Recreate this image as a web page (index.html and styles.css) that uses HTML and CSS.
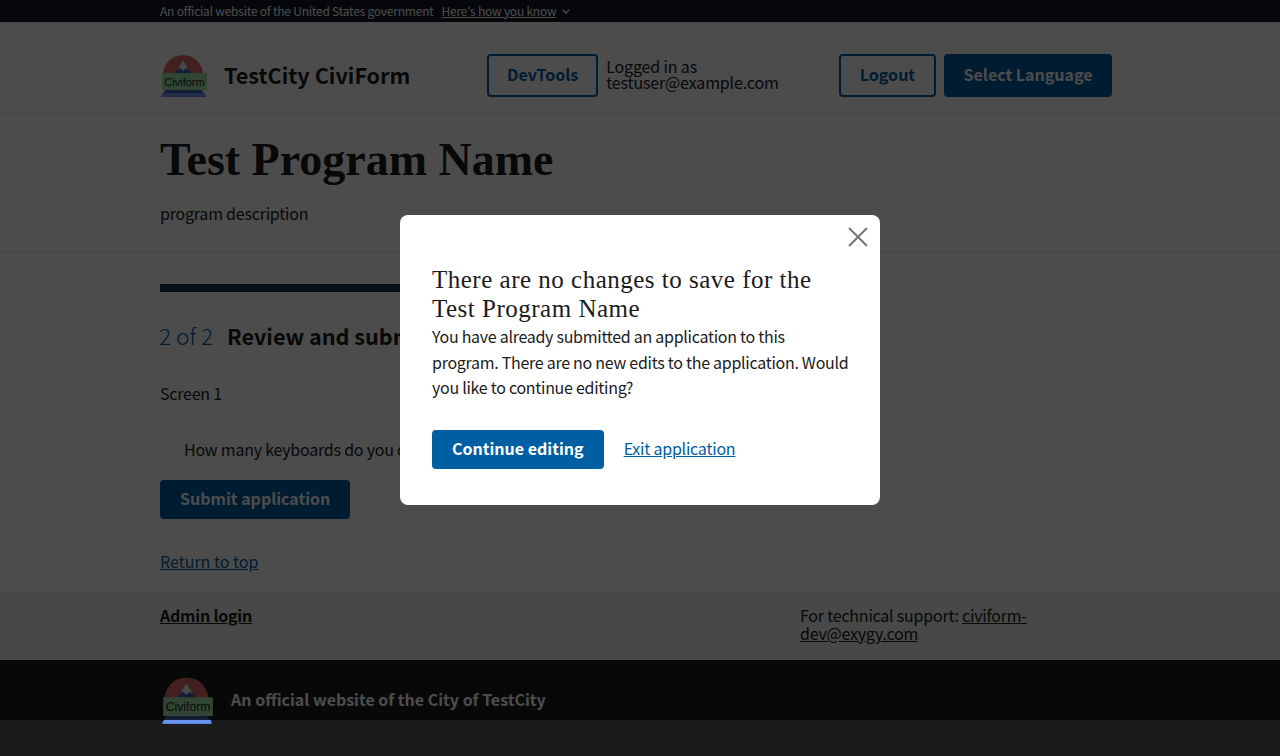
FILE: index.html
```html
<!DOCTYPE html>
<html>
    <head>
        <title>TestCity CiviForm</title>
        <link rel="stylesheet" href="styles.css">
    </head>
    <body>
        <svg class="defs" width="0" height="0">
            <symbol id="civiLogo" viewBox="0 0 48 46">
                <path d="M3 23A20 20 0 0 1 43 23L43 30L3 30Z" fill="#e06a6a"/>
                <polygon points="23,8 1,45 46,45" fill="#3f5fb5"/>
                <polygon points="23,8 17,18 20,16 23,19 26,16 29,18" fill="#f2f2f2"/>
                <rect x="2" y="21" width="45" height="17" fill="#a6e8ae"/>
                <text x="24.5" y="33.5" text-anchor="middle" class="logoText">Civiform</text>
                <polygon points="3,41 45,41 46,45 1,45" fill="#6b93f0"/>
            </symbol>
        </svg>

        <div class="govBanner">
            <div class="wrap bannerRow">
                <span>An official website of the United States government</span>
                <a href="#" class="knowLink">Here's how you know</a>
                <svg class="chevron" width="10" height="10" viewBox="0 0 10 10"><path d="M1.5 3.5L5 7L8.5 3.5" fill="none" stroke="currentColor" stroke-width="1.3"/></svg>
            </div>
        </div>

        <header class="siteHeader">
            <div class="wrap headerRow">
                <div class="brand">
                    <svg class="brandLogo"><use href="#civiLogo"/></svg>
                    <span class="brandName">TestCity CiviForm</span>
                </div>
                <button class="btn btnOutline">DevTools</button>
                <div class="loggedIn">Logged in as<br>testuser@example.com</div>
                <div class="headerActions">
                    <button class="btn btnOutline">Logout</button>
                    <button class="btn btnTall">Select Language</button>
                </div>
            </div>
        </header>

        <section class="hero">
            <div class="wrap">
                <h1>Test Program Name</h1>
                <p>program description</p>
            </div>
        </section>

        <div class="mainArea">
            <main class="wrap mainCol">
                <div class="progress"></div>
                <h2 class="stepTitle"><span class="stepCount">2 of 2</span> Review and submit</h2>
                <div class="screenName">Screen 1</div>
                <div class="question">How many keyboards do you own?</div>
                <button class="btn">Submit application</button>
                <a href="#" class="topLink">Return to top</a>
            </main>
        </div>

        <div class="supportBar">
            <div class="wrap supportRow">
                <a href="#" class="adminLink">Admin login</a>
                <div class="support">For technical support: <a href="#">civiform-dev@exygy.com</a></div>
            </div>
        </div>

        <footer class="siteFooter">
            <div class="wrap footerRow">
                <svg class="footerLogo"><use href="#civiLogo"/></svg>
                <span>An official website of the City of TestCity</span>
            </div>
        </footer>

        <div class="overlay">
            <div class="modal">
                <button class="closeBtn" aria-label="Close">
                    <svg width="20" height="20" viewBox="0 0 20 20"><path d="M1 1L19 19M19 1L1 19" fill="none" stroke="#71767a" stroke-width="2"/></svg>
                </button>
                <h3>There are no changes to save for the Test Program Name</h3>
                <p>You have already submitted an application to this program. There are no new edits to the application. Would you like to continue editing?</p>
                <div class="modalActions">
                    <button class="btn">Continue editing</button>
                    <a href="#">Exit application</a>
                </div>
            </div>
        </div>
    </body>
</html>
```

FILE: styles.css
```css
html, body{
    margin:0;
    padding:0;
}
body{
    min-height:100vh;
    display:flex;
    flex-direction:column;
    overflow:hidden;
    background-color:#1b1b1b;
    color:#1b1b1b;
    font-family:"Noto Sans CJK SC","Liberation Sans",sans-serif;
    font-size:16px;
    letter-spacing:-0.22px;
}
.defs{
    position:absolute;
}
.logoText{
    font-family:"Liberation Sans",sans-serif;
    font-size:11px;
    font-weight:400;
    letter-spacing:0;
    fill:#1b1b1b;
}
.wrap{
    width:952px;
    margin-left:160px;
}
a{
    color:#005ea2;
}
.btn{
    height:39px;
    padding:0 20px 3px;
    border:0;
    border-radius:4px;
    background-color:#005ea2;
    color:white;
    font-family:inherit;
    font-size:16px;
    font-weight:700;
    line-height:1;
}
.btnTall{
    height:43px;
    padding:0 19.5px 3px;
}
.btnOutline{
    height:43px;
    padding:0 18px 3px;
    background-color:white;
    color:#005ea2;
    border:2px solid #005ea2;
}
.headerActions .btnOutline{
    padding:0 19px 3px;
}

.govBanner{
    height:22px;
    background-color:#111827;
    color:white;
    font-size:12px;
}
.bannerRow{
    box-sizing:border-box;
    height:22px;
    padding-bottom:2px;
    display:flex;
    align-items:center;
    gap:8px;
}
.knowLink{
    color:white;
}
.chevron{
    margin-left:-3px;
    margin-top:2px;
}

.siteHeader{
    background-color:white;
    border-bottom:1px solid #e6e6e6;
}
.headerRow{
    box-sizing:border-box;
    height:91px;
    padding-top:32px;
    display:flex;
    align-items:flex-start;
}
.brand{
    width:327px;
    display:flex;
    align-items:center;
    gap:16px;
}
.brandLogo{
    width:48px;
    height:46px;
    margin-top:-2px;
}
.brandName{
    margin-top:-4px;
    font-size:21.6px;
    font-weight:700;
    letter-spacing:0;
}
.loggedIn{
    margin-left:8px;
    margin-top:4px;
    line-height:16px;
    letter-spacing:-0.15px;
}
.headerActions{
    margin-left:auto;
    display:flex;
    gap:8px;
}

.hero{
    background-color:white;
    border-bottom:1px solid #e6e6e6;
    height:137px;
}
.hero h1{
    margin:0;
    padding-top:18px;
    font-family:"Liberation Serif",serif;
    font-size:46px;
    letter-spacing:0;
    line-height:56px;
}
.hero p{
    margin:13px 0 0;
    line-height:25px;
}

.mainArea{
    background-color:white;
}
.mainCol{
    width:640px;
    padding-top:32px;
    padding-bottom:18px;
}
.progress{
    height:8px;
    background-color:#162e51;
}
.stepTitle{
    margin:26px 0 0;
    font-size:21.6px;
    letter-spacing:0;
    line-height:34px;
}
.stepCount{
    margin-left:-1px;
    margin-right:9px;
    color:#005ea2;
    font-size:22.5px;
    font-weight:300;
}
.screenName{
    margin-top:28px;
    line-height:24px;
}
.question{
    margin-top:32px;
    margin-left:24px;
    line-height:24px;
}
.mainCol .btn{
    display:block;
    margin-top:19px;
}
.topLink{
    display:inline-block;
    margin-top:30px;
    line-height:24px;
    letter-spacing:0;
}

.supportBar{
    background-color:#f0f0f0;
    height:69px;
}
.supportRow{
    display:flex;
    padding-top:15px;
}
.supportRow a{
    color:#1b1b1b;
}
.adminLink{
    width:640px;
    font-weight:700;
    line-height:18px;
}
.support{
    width:312px;
    line-height:18px;
}

.siteFooter{
    flex:1;
    background-color:#1b1b1b;
    color:white;
    font-weight:700;
}
.footerRow{
    display:flex;
    gap:17px;
    padding-top:14px;
}
.footerRow span{
    letter-spacing:0;
    line-height:50px;
}
.footerLogo{
    width:53px;
    height:51px;
    margin-left:1px;
}

.overlay{
    position:fixed;
    top:0;
    left:0;
    right:0;
    height:720px;
    background-color:rgba(0,0,0,0.7);
    display:flex;
    align-items:center;
    justify-content:center;
}
.modal{
    position:relative;
    box-sizing:border-box;
    width:480px;
    height:290px;
    padding:50px 32px 0;
    background-color:white;
    border-radius:8px;
}
.modal h3{
    margin:0;
    font-family:"Liberation Serif",serif;
    font-size:25px;
    font-weight:400;
    letter-spacing:0.5px;
    line-height:29px;
}
.modal p{
    margin:1px -4px 0 0;
    line-height:25.6px;
    letter-spacing:-0.28px;
}
.modalActions{
    margin-top:29px;
    display:flex;
    align-items:center;
    gap:20px;
}
.modalActions a{
    margin-top:-2px;
}
.closeBtn{
    position:absolute;
    top:12px;
    right:12px;
    padding:0;
    border:0;
    background:none;
    line-height:0;
}
```
